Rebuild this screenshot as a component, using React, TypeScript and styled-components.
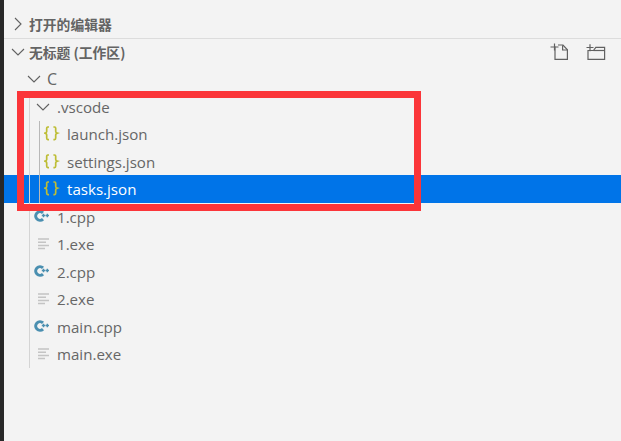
import React from "react";
import styled, { createGlobalStyle } from "styled-components";

const Global = createGlobalStyle`
  html, body { margin: 0; padding: 0; background: #f3f3f3; }
  #root { width: 621px; height: 441px; overflow: hidden; }
`;

const Page = styled.div`
  position: relative;
  box-sizing: border-box;
  width: 621px;
  height: 441px;
  padding-top: 10.5px;
  background: #f3f3f3;
  border-left: 4px solid #282828;
  font-family: "Open Sans", "Noto Sans CJK SC", sans-serif;
  color: #616161;
  overflow: hidden;
`;

const SectionHeader = styled.div<{ $divider?: boolean }>`
  box-sizing: border-box;
  display: flex;
  align-items: center;
  height: 27.5px;
  padding-left: 7px;
  gap: 4px;
  font-family: "Noto Sans CJK SC", sans-serif;
  font-size: 13.8px;
  font-weight: 700;
  color: #646464;
  border-top: ${(p) => (p.$divider ? "1px solid #dcdcdc" : "none")};
`;

const HeaderActions = styled.div`
  display: flex;
  align-items: center;
  gap: 17px;
  margin-left: auto;
  padding-right: 15px;
  color: #616161;
`;

const Row = styled.div<{ $indent: number; $selected?: boolean }>`
  box-sizing: border-box;
  display: flex;
  align-items: center;
  height: 27.5px;
  padding-left: ${(p) => p.$indent}px;
  font-size: 15.1px;
  color: ${(p) => (p.$selected ? "#ffffff" : "#666666")};
  background: ${(p) => (p.$selected ? "#0074e8" : "transparent")};
  box-shadow: ${(p) => (p.$selected ? "0 -1px 0 #0074e8" : "none")};
`;

const IconSlot = styled.span<{ $width: number }>`
  display: flex;
  align-items: center;
  flex: none;
  width: ${(p) => p.$width}px;
`;

const Group = styled.div<{ $guide: number; $color: string }>`
  position: relative;
  &::before {
    content: "";
    position: absolute;
    left: ${(p) => p.$guide}px;
    top: 0;
    bottom: 0;
    width: 1px;
    background: ${(p) => p.$color};
    z-index: 1;
  }
`;

const Highlight = styled.div`
  position: absolute;
  left: 13px;
  top: 91px;
  width: 404px;
  height: 120px;
  box-sizing: border-box;
  border: 7px solid #fb3539;
  z-index: 2;
`;

const RootLabel = styled.span`
  font-size: 16px;
`;

const Chevron = ({ open }: { open?: boolean }) => (
  <svg width="14" height="14" viewBox="0 0 14 14" fill="none" stroke="#616161" strokeWidth="1.1">
    {open ? <path d="M1 4l6 6 6-6" /> : <path d="M4 1l6 6-6 6" />}
  </svg>
);

const JsonIcon = () => (
  <svg width="16" height="16" viewBox="0 0 16 16" fill="none" stroke="#bdbd35" strokeWidth="1.7">
    <path d="M5 1H3.8C3 1 2.7 1.6 2.7 2.3V5.6C2.7 6.4 2.2 7 1.2 7.2 2.2 7.6 2.7 8 2.7 8.8V12C2.7 12.8 3 13.6 3.8 13.6H5" />
    <path d="M9.4 1H10.6C11.4 1 11.7 1.6 11.7 2.3V5.6C11.7 6.4 12.2 7 13.2 7.2 12.2 7.6 11.7 8 11.7 8.8V12C11.7 12.8 11.4 13.6 10.6 13.6H9.4" />
  </svg>
);

const CppIcon = () => (
  <svg width="16" height="16" viewBox="0 0 16 16" fill="none" stroke="#4a8fb0">
    <path d="M9 3.9A4.3 4.3 0 1 0 9 10.1" strokeWidth="3.1" />
    <path d="M7.8 6.5h3.4M9.5 4.8v3.4M11.6 6.5h3.4M13.3 4.8v3.4" strokeWidth="1.4" />
  </svg>
);

const ExeIcon = () => (
  <svg width="14" height="14" viewBox="0 0 14 14" fill="none" stroke="#c4c4c4" strokeWidth="1.5">
    <path d="M1 2h11M1 5.2h8M1 8.4h11M1 11.6h7" />
  </svg>
);

const NewFileIcon = () => (
  <svg width="19" height="18" viewBox="0 0 19 18" fill="none" stroke="currentColor" strokeWidth="1.2">
    <path d="M5 3.5V16.4H17.4V6.8L13 2H8" />
    <path d="M12.6 2.2V7H17.4" />
    <path d="M0.5 4h8M4.5 0.5v7" />
  </svg>
);

const NewFolderIcon = () => (
  <svg width="20" height="17" viewBox="0 0 20 17" fill="none" stroke="currentColor" strokeWidth="1.2">
    <path d="M2 6.5V15.4H18.6V3.4H9.8L7.5 6.5H2Z" />
    <path d="M7.5 6.5H18.6" />
    <path d="M0.5 3.5h7M4 0.2v7" />
  </svg>
);

type FileKind = "json" | "cpp" | "exe";

const fileIcon = (kind: FileKind) =>
  kind === "json" ? <JsonIcon /> : kind === "cpp" ? <CppIcon /> : <ExeIcon />;

const jsonFiles = ["launch.json", "settings.json", "tasks.json"];
const rootFiles: { name: string; kind: FileKind; indent: number }[] = [
  { name: "1.cpp", kind: "cpp", indent: 30 },
  { name: "1.exe", kind: "exe", indent: 33 },
  { name: "2.cpp", kind: "cpp", indent: 30 },
  { name: "2.exe", kind: "exe", indent: 33 },
  { name: "main.cpp", kind: "cpp", indent: 30 },
  { name: "main.exe", kind: "exe", indent: 33 },
];

export default function App() {
  return (
    <Page>
      <Global />
      <SectionHeader>
        <Chevron />
        <span>打开的编辑器</span>
      </SectionHeader>
      <SectionHeader $divider>
        <Chevron open />
        <span>无标题 (工作区)</span>
        <HeaderActions>
          <NewFileIcon />
          <NewFolderIcon />
        </HeaderActions>
      </SectionHeader>
      <Row $indent={23}>
        <IconSlot $width={20}>
          <Chevron open />
        </IconSlot>
        <RootLabel>C</RootLabel>
      </Row>
      <Group $guide={25} $color="#d4d4d4">
        <Row $indent={32}>
          <IconSlot $width={21}>
            <Chevron open />
          </IconSlot>
          .vscode
        </Row>
        <Group $guide={35} $color="#b8b8b8">
          {jsonFiles.map((name) => (
            <Row key={name} $indent={40} $selected={name === "tasks.json"}>
              <IconSlot $width={23}>
                <JsonIcon />
              </IconSlot>
              {name}
            </Row>
          ))}
        </Group>
        {rootFiles.map((file) => (
          <Row key={file.name} $indent={file.indent}>
            <IconSlot $width={53 - file.indent}>{fileIcon(file.kind)}</IconSlot>
            {file.name}
          </Row>
        ))}
      </Group>
      <Highlight />
    </Page>
  );
}
